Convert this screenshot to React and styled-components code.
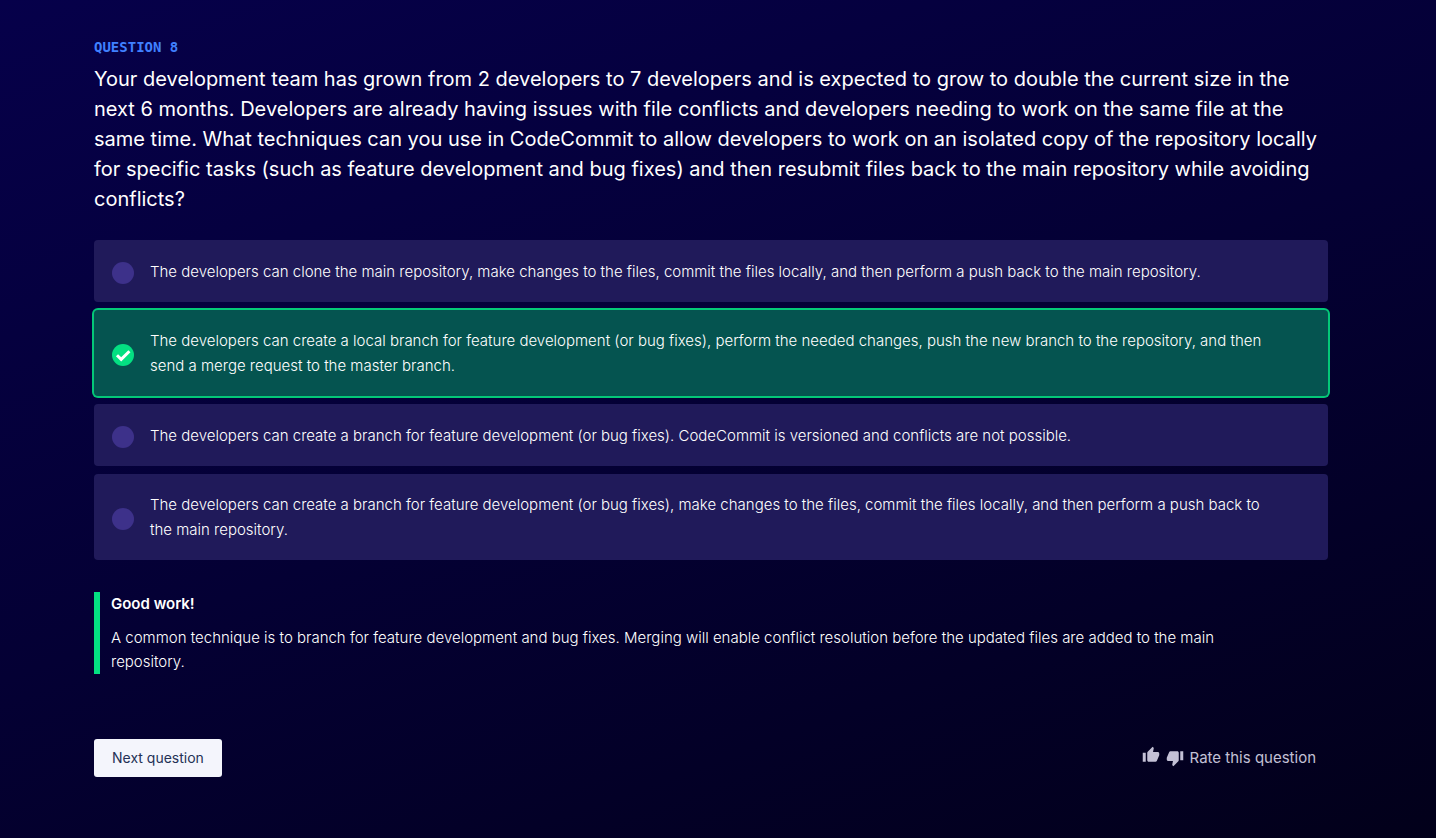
import React, { useState } from "react";
import styled, { createGlobalStyle } from "styled-components";
import { MdThumbUp, MdThumbDown } from "react-icons/md";

const GlobalStyle = createGlobalStyle`
  * { box-sizing: border-box; }
  body {
    margin: 0;
    background: #02001b;
    color: #fff;
    font-family: Inter, "Liberation Sans", sans-serif;
  }
`;

const Page = styled.main`
  min-height: 100vh;
  padding: 38px 108px 60px 94px;
  background: linear-gradient(160deg, #06004a 0%, #040034 50%, #02001a 100%);
`;

const Eyebrow = styled.p`
  margin: 0;
  font: bold 14px/18px "DejaVu Sans Mono", monospace;
  color: #4080ff;
`;

const Question = styled.h1`
  margin: 8px 0 26px;
  font-size: 20px;
  line-height: 30px;
  font-weight: 400;
`;

const Options = styled.fieldset`
  display: flex;
  flex-direction: column;
  gap: 8px;
  min-width: 0;
  margin: 0;
  padding: 0;
  border: 0;
`;

const Option = styled.label`
  display: flex;
  align-items: center;
  gap: 16px;
  padding: 18px 52px 18px 18px;
  border-radius: 4px;
  background: ${(p) => (p.$correct ? "#055450" : "#201a5a")};
  box-shadow: ${(p) => (p.$correct ? "0 0 0 2px #04c778" : "none")};
  font-size: 15px;
  line-height: 25px;
  font-weight: 300;
  cursor: pointer;
`;

const Marker = styled.span`
  display: grid;
  flex: none;
  width: 22px;
  height: 22px;
  margin-top: 4px;

  > * {
    grid-area: 1 / 1;
  }
`;

const Radio = styled.input`
  appearance: none;
  width: 22px;
  height: 22px;
  margin: 0;
  border-radius: 50%;
  background: #3d318a;

  &:checked {
    background: #04e082;
  }
`;

const Check = styled.svg`
  width: 22px;
  height: 22px;
  fill: none;
  stroke: #fff;
  stroke-width: 3;
  pointer-events: none;
`;

const OptionText = styled.span`
  flex: 1;
`;

const Feedback = styled.section`
  margin-top: 32px;
  padding: 0 64px 0 11px;
  border-left: 6px solid #04e082;
`;

const FeedbackTitle = styled.h2`
  margin: 0;
  font-size: 15px;
  line-height: 24px;
  font-weight: 600;
`;

const FeedbackText = styled.p`
  margin: 10px 0 0;
  font-size: 15px;
  line-height: 24px;
  font-weight: 300;
`;

const Footer = styled.footer`
  display: flex;
  align-items: center;
  justify-content: space-between;
  margin-top: 65px;
`;

const NextButton = styled.button`
  height: 38px;
  padding: 0 18px;
  border: 0;
  border-radius: 3px;
  background: #f4f5fc;
  color: #243156;
  font: 400 14px/20px Inter, sans-serif;
  cursor: pointer;
`;

const Rating = styled.div`
  display: flex;
  align-items: center;
  gap: 6px;
  padding-right: 12px;
  color: #c3c0d5;
  font-size: 15px;
  line-height: 24px;
`;

const RateButton = styled.button`
  display: flex;
  align-self: ${(p) => (p.$raised ? "flex-start" : "center")};
  padding: 0;
  border: 0;
  background: none;
  color: inherit;
  cursor: pointer;
`;

const answers = [
  "The developers can clone the main repository, make changes to the files, commit the files locally, and then perform a push back to the main repository.",
  "The developers can create a local branch for feature development (or bug fixes), perform the needed changes, push the new branch to the repository, and then send a merge request to the master branch.",
  "The developers can create a branch for feature development (or bug fixes). CodeCommit is versioned and conflicts are not possible.",
  "The developers can create a branch for feature development (or bug fixes), make changes to the files, commit the files locally, and then perform a push back to the main repository.",
];

export default function App() {
  const [choice, setChoice] = useState(1);
  return (
    <Page>
      <GlobalStyle />
      <Eyebrow>QUESTION 8</Eyebrow>
      <Question id="question">
        Your development team has grown from 2 developers to 7 developers and is
        expected to grow to double the current size in the next 6 months.
        Developers are already having issues with file conflicts and developers
        needing to work on the same file at the same time. What techniques can
        you use in CodeCommit to allow developers to work on an isolated copy of
        the repository locally for specific tasks (such as feature development
        and bug fixes) and then resubmit files back to the main repository while
        avoiding conflicts?
      </Question>
      <Options aria-labelledby="question">
        {answers.map((text, i) => (
          <Option key={text} $correct={choice === i}>
            <Marker>
              <Radio
                type="radio"
                name="answer"
                checked={choice === i}
                onChange={() => setChoice(i)}
              />
              {choice === i && (
                <Check viewBox="0 0 22 22" aria-hidden="true">
                  <path d="M5 11.2 9.2 15.4 17.4 7.2" />
                </Check>
              )}
            </Marker>
            <OptionText>{text}</OptionText>
          </Option>
        ))}
      </Options>
      <Feedback>
        <FeedbackTitle>Good work!</FeedbackTitle>
        <FeedbackText>
          A common technique is to branch for feature development and bug fixes.
          Merging will enable conflict resolution before the updated files are
          added to the main repository.
        </FeedbackText>
      </Feedback>
      <Footer>
        <NextButton type="button">Next question</NextButton>
        <Rating>
          <RateButton type="button" aria-label="Thumbs up" $raised>
            <MdThumbUp size={18} />
          </RateButton>
          <RateButton type="button" aria-label="Thumbs down">
            <MdThumbDown size={18} />
          </RateButton>
          <span>Rate this question</span>
        </Rating>
      </Footer>
    </Page>
  );
}
